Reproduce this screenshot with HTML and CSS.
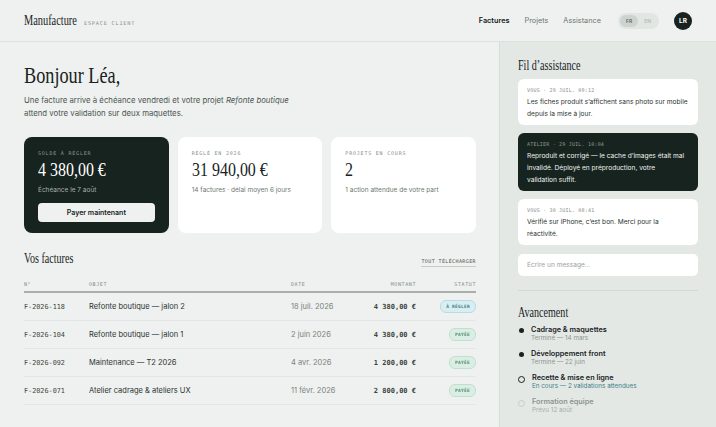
FILE: index.html
```html
<!DOCTYPE html>
<html lang="fr">
<head>
<meta charset="UTF-8">
<meta name="viewport" content="width=device-width, initial-scale=1.0">
<title>Manufacture — Espace client</title>
<link rel="stylesheet" href="styles.css">
</head>
<body>
<header class="topbar">
    <div class="brand">
        <span class="logo">Manufacture</span>
        <span class="tag">ESPACE CLIENT</span>
    </div>
    <nav class="nav">
        <a class="nav-link active" href="#">Factures</a>
        <a class="nav-link" href="#">Projets</a>
        <a class="nav-link" href="#">Assistance</a>
        <div class="lang">
            <span class="lang-opt on">FR</span>
            <span class="lang-opt">EN</span>
        </div>
        <span class="avatar">LR</span>
    </nav>
</header>

<div class="layout">
    <main class="main">
        <h1 class="hello">Bonjour Léa,</h1>
        <p class="intro">Une facture arrive à échéance vendredi et votre projet <em>Refonte boutique</em><br>attend votre validation sur deux maquettes.</p>

        <section class="cards">
            <div class="card dark">
                <div class="label">SOLDE À RÉGLER</div>
                <div class="amount">4 380,00 €</div>
                <div class="note">Échéance le 7 août</div>
                <button class="pay">Payer maintenant</button>
            </div>
            <div class="card">
                <div class="label">RÉGLÉ EN 2026</div>
                <div class="amount">31 940,00 €</div>
                <div class="note">14 factures · délai moyen 6 jours</div>
            </div>
            <div class="card">
                <div class="label">PROJETS EN COURS</div>
                <div class="amount">2</div>
                <div class="note">1 action attendue de votre part</div>
            </div>
        </section>

        <div class="section-head">
            <h2 class="title">Vos factures</h2>
            <a class="dl" href="#">TOUT TÉLÉCHARGER</a>
        </div>

        <table class="invoices">
            <thead>
                <tr>
                    <th class="c-num">N°</th>
                    <th class="c-obj">OBJET</th>
                    <th class="c-date">DATE</th>
                    <th class="c-amt">MONTANT</th>
                    <th class="c-st">STATUT</th>
                </tr>
            </thead>
            <tbody>
                <tr>
                    <td class="c-num">F-2026-118</td>
                    <td class="c-obj">Refonte boutique — jalon 2</td>
                    <td class="c-date">18 juil. 2026</td>
                    <td class="c-amt">4 380,00 €</td>
                    <td class="c-st"><span class="badge due">À RÉGLER</span></td>
                </tr>
                <tr>
                    <td class="c-num">F-2026-104</td>
                    <td class="c-obj">Refonte boutique — jalon 1</td>
                    <td class="c-date">2 juin 2026</td>
                    <td class="c-amt">4 380,00 €</td>
                    <td class="c-st"><span class="badge paid">PAYÉE</span></td>
                </tr>
                <tr>
                    <td class="c-num">F-2026-092</td>
                    <td class="c-obj">Maintenance — T2 2026</td>
                    <td class="c-date">4 avr. 2026</td>
                    <td class="c-amt">1 200,00 €</td>
                    <td class="c-st"><span class="badge paid">PAYÉE</span></td>
                </tr>
                <tr>
                    <td class="c-num">F-2026-071</td>
                    <td class="c-obj">Atelier cadrage &amp; ateliers UX</td>
                    <td class="c-date">11 févr. 2026</td>
                    <td class="c-amt">2 800,00 €</td>
                    <td class="c-st"><span class="badge paid">PAYÉE</span></td>
                </tr>
            </tbody>
        </table>
    </main>

    <aside class="side">
        <h2 class="title">Fil d’assistance</h2>
        <div class="thread">
            <div class="msg">
                <div class="meta">VOUS · 29 JUIL. 09:12</div>
                <p>Les fiches produit s’affichent sans photo sur mobile depuis la mise à jour.</p>
            </div>
            <div class="msg team">
                <div class="meta">ATELIER · 29 JUIL. 10:04</div>
                <p>Reproduit et corrigé — le cache d’images était mal invalidé. Déployé en préproduction, votre validation suffit.</p>
            </div>
            <div class="msg">
                <div class="meta">VOUS · 30 JUIL. 08:41</div>
                <p>Vérifié sur iPhone, c’est bon. Merci pour la réactivité.</p>
            </div>
            <input class="reply" type="text" placeholder="Écrire un message...">
        </div>

        <h2 class="title progress-title">Avancement</h2>
        <ul class="steps">
            <li class="step done">
                <span class="dot"></span>
                <div><div class="step-name">Cadrage &amp; maquettes</div><div class="step-sub">Terminé — 14 mars</div></div>
            </li>
            <li class="step done">
                <span class="dot"></span>
                <div><div class="step-name">Développement front</div><div class="step-sub">Terminé — 22 juin</div></div>
            </li>
            <li class="step current">
                <span class="dot"></span>
                <div><div class="step-name">Recette &amp; mise en ligne</div><div class="step-sub">En cours — 2 validations attendues</div></div>
            </li>
            <li class="step next">
                <span class="dot"></span>
                <div><div class="step-name">Formation équipe</div><div class="step-sub">Prévu 12 août</div></div>
            </li>
        </ul>
    </aside>
</div>
</body>
</html>
```

FILE: styles.css
```css
body {
    margin: 0;
    font-family: Inter, "Noto Sans", sans-serif;
    background-color: #eef1ef;
    color: #18221e;
    font-size: 8px;
}

/* narrow display serif: squeeze Liberation Serif */
.logo, .hello, .title, .amount {
    display: inline-block;
    font-family: "Liberation Serif", serif;
    font-weight: normal;
    transform-origin: left center;
    transform: scaleX(0.74);
}

.topbar {
    height: 41px;
    border-bottom: 1px solid #dde2df;
    display: flex;
    align-items: center;
    justify-content: space-between;
    padding: 0 24px;
}

.brand {
    display: flex;
    align-items: baseline;
}

.logo {
    font-size: 14px;
    width: 60px;
}

.tag, .label, .dl, th, .meta, .badge, .c-num, .c-amt {
    font-family: "DejaVu Sans Mono", "Liberation Mono", monospace;
}

.tag {
    font-size: 5.3px;
    letter-spacing: 0.14em;
    color: #8b948f;
}

.nav {
    display: flex;
    align-items: center;
    gap: 15px;
}

.nav-link {
    color: #6d7772;
    text-decoration: none;
    font-size: 7.3px;
}

.nav-link.active {
    color: #18221e;
    font-weight: 600;
}

.lang {
    display: flex;
    background: #e1e6e3;
    border-radius: 8px;
    padding: 2px;
    margin-left: 2px;
}

.lang-opt {
    font-size: 5px;
    font-weight: 600;
    color: #b3bab6;
    padding: 3px 6px;
    border-radius: 6px;
}

.lang-opt.on {
    background: #cdd3cf;
    color: #5f6863;
}

.avatar {
    width: 18px;
    height: 18px;
    border-radius: 50%;
    background: #18221e;
    color: #fff;
    font-size: 6.5px;
    font-weight: 700;
    display: flex;
    align-items: center;
    justify-content: center;
}

.layout {
    display: grid;
    grid-template-columns: 1fr 217px;
    min-height: 385px;
}

.main {
    padding: 17px 23px 0 24px;
}

.hello {
    font-size: 24px;
    margin: 0;
    line-height: 32px;
    transform: scaleX(0.76);
}

.intro {
    margin: 3px 0 0;
    font-size: 7.8px;
    line-height: 13px;
    color: #4c5651;
}

.cards {
    display: grid;
    grid-template-columns: repeat(3, 1fr);
    gap: 9px;
    margin-top: 17px;
}

.card {
    background: #fff;
    border-radius: 8px;
    padding: 13px 14px;
    height: 96px;
    box-sizing: border-box;
}

.card.dark {
    background: #17231f;
    color: #fff;
}

.label {
    font-size: 5px;
    letter-spacing: 0.16em;
    color: #858e89;
}

.card.dark .label {
    color: #8f9a94;
}

.amount {
    font-size: 19px;
    line-height: 24px;
    margin-top: 2px;
    transform: scaleX(0.84);
}

.note {
    font-size: 6.5px;
    color: #6d7772;
    margin-top: 4px;
}

.card.dark .note {
    color: #a8b1ac;
}

.pay {
    margin-top: 9px;
    width: 100%;
    height: 19px;
    border: none;
    border-radius: 4px;
    background: #eef1ef;
    color: #18221e;
    font-family: Inter, sans-serif;
    font-size: 7px;
    font-weight: 600;
}

.section-head {
    display: flex;
    justify-content: space-between;
    align-items: baseline;
    margin-top: 18px;
}

.title {
    font-size: 14px;
    margin: 0;
    transform: scaleX(0.72);
}

.dl {
    font-size: 5px;
    letter-spacing: 0.08em;
    color: #4c5651;
    text-decoration: none;
    border-bottom: 1px solid #c6ccc8;
    padding-bottom: 2px;
}

.invoices {
    width: 100%;
    border-collapse: collapse;
    margin-top: 14px;
}

th {
    font-size: 5px;
    font-weight: normal;
    letter-spacing: 0.12em;
    color: #858e89;
    text-align: left;
    padding: 0 0 4px;
    border-bottom: 2px solid #a9b0ac;
}

td {
    height: 27px;
    border-bottom: 1px solid #e2e6e4;
    font-size: 7.5px;
    padding: 0;
}

.c-num {
    width: 65px;
    font-size: 6.8px;
    color: #3b4540;
}

.c-obj {
    width: 202px;
    color: #2a332f;
}

.c-date {
    color: #7a837e;
}

.c-amt {
    text-align: right;
    font-size: 7px;
    font-weight: bold;
    color: #3b4540;
}

.c-st {
    text-align: right;
    width: 60px;
}

th.c-num, th.c-amt, th.c-st, th.c-date, th.c-obj {
    font-size: 5px;
    font-weight: normal;
    color: #858e89;
}

.badge {
    display: inline-block;
    font-size: 4.5px;
    font-weight: bold;
    letter-spacing: 0.06em;
    padding: 3px 5px;
    border-radius: 6px;
}

.badge.due {
    background: #d9eef1;
    border: 1px solid #b5dde3;
    color: #3e7f88;
}

.badge.paid {
    background: #dbeee5;
    border: 1px solid #bfe0cf;
    color: #4d8a6d;
}

.side {
    background: #e3e8e5;
    border-left: 1px solid #d6dcd8;
    padding: 16px 18px 0;
}

.thread {
    display: flex;
    flex-direction: column;
    gap: 8px;
    margin-top: 5px;
    padding-bottom: 14px;
    border-bottom: 1px solid #d3d9d5;
}

.msg {
    background: #fff;
    border-radius: 6px;
    padding: 8px 9px 5px;
}

.msg.team {
    background: #17231f;
    color: #fff;
}

.meta {
    font-size: 5px;
    line-height: 6px;
    letter-spacing: 0.04em;
    color: #858e89;
}

.msg.team .meta {
    color: #8f9a94;
}

.msg p {
    margin: 3px 0 0;
    font-size: 6.6px;
    line-height: 12px;
    color: #2a332f;
}

.msg.team p {
    color: #f0f3f1;
    padding-right: 3px;
}

.reply {
    height: 22px;
    border: none;
    border-radius: 5px;
    background: #fff;
    padding: 0 9px;
    font-family: Inter, sans-serif;
    font-size: 6.6px;
    margin-top: 1px;
}

.reply::placeholder {
    color: #9aa29e;
}

.progress-title {
    margin-top: 14px;
}

.steps {
    list-style: none;
    margin: 4px 0 0;
    padding: 0;
    display: flex;
    flex-direction: column;
    gap: 7px;
}

.step {
    display: flex;
    align-items: flex-start;
    gap: 7px;
}

.dot {
    width: 5px;
    height: 5px;
    border-radius: 50%;
    margin-top: 3px;
    margin-left: 1px;
    flex: none;
    box-sizing: border-box;
}

.step.done .dot {
    background: #18221e;
}

.step.current .dot {
    width: 7px;
    height: 7px;
    margin-left: 0;
    border: 1.5px solid #18221e;
}

.step.next .dot {
    width: 7px;
    height: 7px;
    margin-left: 0;
    border: 1px solid #c6ccc8;
}

.step-name {
    font-size: 7.3px;
    font-weight: 600;
    color: #18221e;
}

.step-sub {
    font-size: 6.3px;
    color: #8b948f;
}

.step.current .step-sub {
    color: #3e7f88;
}

.step.next .step-name {
    color: #8b948f;
}

.step.next .step-sub {
    color: #a5ada9;
}
```
